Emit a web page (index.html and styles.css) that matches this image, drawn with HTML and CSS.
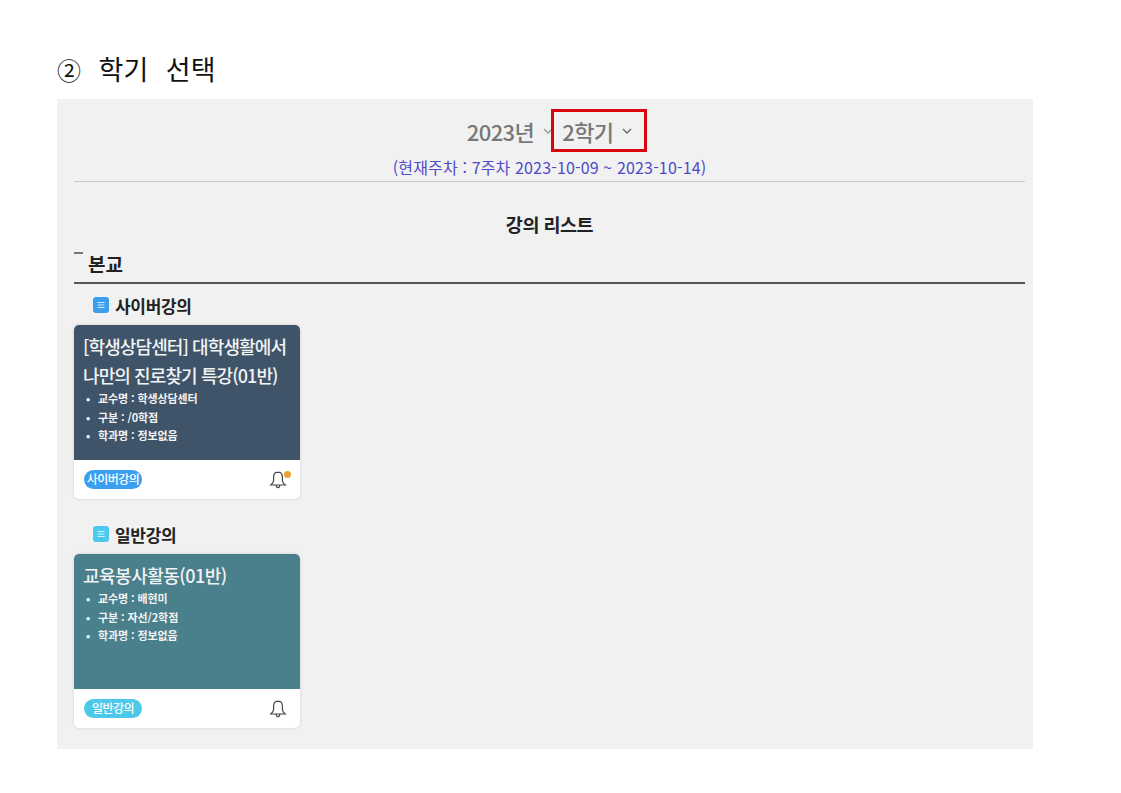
FILE: index.html
```html
<!DOCTYPE html>
<html lang="ko">
<head>
  <meta charset="UTF-8">
  <title>학기 선택</title>
  <link rel="stylesheet" href="styles.css">
</head>
<body>
  <h1 class="step-title"><span class="step-no">②</span> 학기 선택</h1>

  <div class="panel">
    <div class="term-head">
      <div class="term-select">
        <span class="year">2023년</span>
        <svg class="chev chev-year" viewBox="0 0 10 6"><path d="M1 1l4 4 4-4"/></svg>
        <span class="term-box">
          <span>2학기</span>
          <svg class="chev" viewBox="0 0 10 6"><path d="M1 1l4 4 4-4"/></svg>
        </span>
      </div>
      <div class="week">(현재주차 : 7주차 2023-10-09 ~ 2023-10-14)</div>
    </div>

    <h2 class="list-title">강의 리스트</h2>

    <div class="campus"><span class="campus-dash"></span><span>본교</span></div>

    <h3 class="group-title">
      <svg class="group-icon" viewBox="0 0 16 16"><rect width="16" height="16" rx="3" fill="#3a9df0"/><path d="M4.500 5.500h7M4.500 8h7M4.500 10.500h7" stroke="#cfe8fb" stroke-width="1"/></svg>
      사이버강의
    </h3>
    <div class="card">
      <div class="card-body navy">
        <div class="card-name">[학생상담센터] 대학생활에서 나만의 진로찾기 특강(01반)</div>
        <ul class="card-info">
          <li>교수명 : 학생상담센터</li>
          <li>구분 : /0학점</li>
          <li>학과명 : 정보없음</li>
        </ul>
      </div>
      <div class="card-foot">
        <span class="tag tag-blue">사이버강의</span>
        <span class="bell">
          <svg viewBox="0 0 18 20"><path d="M9 2.200c-3 0-4.400 2.300-4.400 5v3.300c0 1.700-1 3-2.800 4.500h14.400c-1.800-1.500-2.800-2.800-2.800-4.500V7.200c0-2.700-1.400-5-4.400-5zM7.300 15.500c0 1.200.7 2.200 1.700 2.200s1.700-1 1.700-2.200"/></svg>
          <i class="bell-dot"></i>
        </span>
      </div>
    </div>

    <h3 class="group-title">
      <svg class="group-icon" viewBox="0 0 16 16"><rect width="16" height="16" rx="3" fill="#4cc9ee"/><path d="M4.500 5.500h7M4.500 8h7M4.500 10.500h7" stroke="#cff1fb" stroke-width="1"/></svg>
      일반강의
    </h3>
    <div class="card">
      <div class="card-body teal">
        <div class="card-name">교육봉사활동(01반)</div>
        <ul class="card-info">
          <li>교수명 : 배현미</li>
          <li>구분 : 자선/2학점</li>
          <li>학과명 : 정보없음</li>
        </ul>
      </div>
      <div class="card-foot">
        <span class="tag tag-sky">일반강의</span>
        <span class="bell">
          <svg viewBox="0 0 18 20"><path d="M9 2.200c-3 0-4.400 2.300-4.400 5v3.300c0 1.700-1 3-2.800 4.500h14.400c-1.800-1.500-2.800-2.800-2.800-4.500V7.200c0-2.700-1.400-5-4.400-5zM7.300 15.500c0 1.200.7 2.200 1.700 2.200s1.700-1 1.700-2.200"/></svg>
        </span>
      </div>
    </div>
  </div>
</body>
</html>
```

FILE: styles.css
```css
* {
  box-sizing: border-box;
}

body {
  margin: 0;
  background: #fff;
  color: #222;
  font-family: "Noto Sans CJK KR", "Noto Sans", sans-serif;
}

.step-title {
  margin: 0;
  height: 99px;
  padding: 50px 0 0 57px;
  font-size: 27px;
  line-height: 38px;
  font-weight: 400;
  color: #111;
  word-spacing: 10px;
}

.step-no {
  font-size: 24px;
}

.panel {
  width: 976px;
  height: 650px;
  margin-left: 57px;
  padding: 0 8px 0 17px;
  background: #f1f1f1;
}

.term-head {
  height: 83px;
  padding-top: 10px;
  border-bottom: 1px solid #c9c9c9;
  text-align: center;
}

.term-select {
  display: flex;
  justify-content: center;
  align-items: center;
  height: 43px;
  padding-left: 15px;
  color: #777;
  font-size: 22px;
  letter-spacing: -0.6px;
  font-weight: 500;
}

.term-box {
  display: flex;
  align-items: center;
  gap: 9px;
  width: 96px;
  height: 43px;
  padding-left: 8px;
  border: 3px solid #d9040f;
}

.chev {
  width: 10px;
  height: 6px;
  fill: none;
  stroke: #666;
  stroke-width: 1.4;
}

.chev-year {
  margin: 0 -2px 0 9px;
  stroke: #999;
}

.week {
  margin-top: 5px;
  font-size: 16px;
  line-height: 20px;
  letter-spacing: 0.15px;
  color: #4f4bc8;
}

.list-title {
  margin: 30px 0 0;
  text-align: center;
  font-size: 18.5px;
  line-height: 24px;
  letter-spacing: -0.5px;
  font-weight: 700;
  color: #222;
}

.campus {
  display: flex;
  height: 48px;
  margin-bottom: 1px;
  padding: 14px 0 0;
  border-bottom: 2px solid #555;
  font-size: 19px;
  line-height: 28px;
  font-weight: 700;
  color: #222;
}

.campus-dash {
  width: 9px;
  height: 2px;
  margin: 2px 5px 0 0;
  background: #777;
}

.group-title {
  display: flex;
  align-items: center;
  gap: 6px;
  margin: 0;
  height: 40px;
  padding-left: 19px;
  font-size: 17px;
  letter-spacing: -0.3px;
  font-weight: 700;
  color: #222;
}

.group-icon {
  width: 16px;
  height: 16px;
}

.card {
  width: 226px;
  height: 174px;
  margin-bottom: 15px;
  background: #fff;
  border-radius: 5px;
  box-shadow: 0 0 3px rgba(0, 0, 0, 0.16);
  overflow: hidden;
}

.card-body {
  height: 135px;
  padding: 7px 9px 0;
  color: #f1f3f4;
}

.navy {
  background: #3f5468;
}

.teal {
  background: #4a7f8c;
}

.card-name {
  font-size: 18px;
  line-height: 29px;
  font-weight: 500;
  letter-spacing: -0.5px;
  word-break: keep-all;
}

.navy .card-name {
  letter-spacing: -0.9px;
}

.card-info {
  margin: -1px 0 0;
  padding: 0 0 0 3px;
  list-style: none;
  font-size: 11px;
  line-height: 18.5px;
  font-weight: 700;
  letter-spacing: -0.1px;
}

.card-info li::before {
  content: "•";
  display: inline-block;
  width: 12px;
}

.card-foot {
  display: flex;
  align-items: center;
  justify-content: space-between;
  height: 39px;
  padding: 0 13px 0 10px;
}

.tag {
  width: 58px;
  height: 19px;
  border-radius: 10px;
  color: #fff;
  font-size: 12px;
  line-height: 18px;
  font-weight: 500;
  letter-spacing: -0.5px;
  text-align: center;
  white-space: nowrap;
}

.tag-blue {
  background: #3a9ff0;
}

.tag-sky {
  background: #4cc9e8;
}

.bell {
  position: relative;
  width: 18px;
  height: 20px;
}

.bell svg {
  display: block;
  width: 18px;
  height: 20px;
  fill: none;
  stroke: #444;
  stroke-width: 1.2;
}

.bell-dot {
  position: absolute;
  top: 1px;
  right: -4px;
  width: 7px;
  height: 7px;
  border-radius: 50%;
  background: #f0a030;
}
```
